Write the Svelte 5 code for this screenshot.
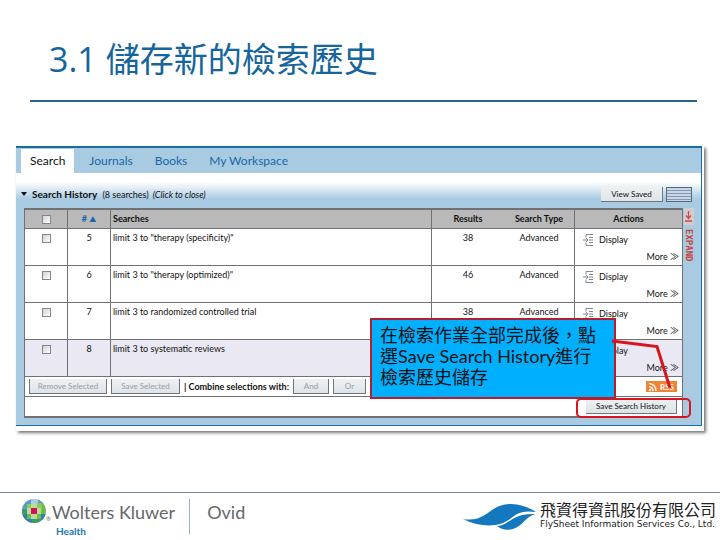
<script>
	const tabs = ['Search', 'Journals', 'Books', 'My Workspace'];
	const active = 'Search';

	const searches = [
		{ id: 5, text: 'limit 3 to "therapy (specificity)"', results: 38, type: 'Advanced' },
		{ id: 6, text: 'limit 3 to "therapy (optimized)"', results: 46, type: 'Advanced' },
		{ id: 7, text: 'limit 3 to randomized controlled trial', results: 38, type: 'Advanced' },
		{ id: 8, text: 'limit 3 to systematic reviews', results: '', type: '' }
	];
</script>

<div class="slide">
	<h1 class="title">3.1 儲存新的檢索歷史</h1>

	<main class="shot">
		<div class="panel">
			<nav class="tabs">
				{#each tabs as tab}
					<a href="#top" class="tab" class:active={tab === active}>{tab}</a>
				{/each}
			</nav>

			<div class="heading">
				<span class="arrow"></span>
				<h2>Search History</h2>
				<span class="count">(8 searches)</span>
				<em>(Click to close)</em>
				<button class="btn view">View Saved</button>
				<span class="stripes"></span>
			</div>

			<div class="body">
				<div class="grid">
					<table>
						<thead>
							<tr>
								<th class="check"><input type="checkbox" aria-label="Select all" /></th>
								<th class="num"># <span class="sort">▲</span></th>
								<th class="text">Searches</th>
								<th class="results">Results</th>
								<th class="type">Search Type</th>
								<th class="actions">Actions</th>
							</tr>
						</thead>
						<tbody>
							{#each searches as s}
								<tr class:last={s.id === 8}>
									<td class="check"><input type="checkbox" aria-label={`Select search ${s.id}`} /></td>
									<td class="num">{s.id}</td>
									<td class="text">{s.text}</td>
									<td class="results">{s.results}</td>
									<td class="type">{s.type}</td>
									<td class="actions">
										<a href="#top" class="display">
											<svg width="11" height="12" viewBox="0 0 11 12" aria-hidden="true">
												<path
													d="M3 .5h7M3 .5v3M3 8.500v3M3 11.500h7M6 3.500h4M6 6h4M6 8.500h4M0 6h5M3 4l2 2-2 2"
													fill="none"
													stroke="#7f8890"
												/>
											</svg>
											Display
										</a>
										<a href="#top" class="more">More ≫</a>
									</td>
								</tr>
							{/each}
						</tbody>
					</table>
					<div class="bar">
						<button class="btn remove" disabled>Remove Selected</button>
						<button class="btn save" disabled>Save Selected</button>
						<span class="combine">| Combine selections with:</span>
						<button class="btn and" disabled>And</button>
						<button class="btn or" disabled>Or</button>
						<a href="#top" class="rss">
							<svg width="11" height="10" viewBox="0 0 11 10" aria-hidden="true">
								<circle cx="3" cy="8" r="1.2" fill="#fff" />
								<path d="M2 4.6a4 4 0 0 1 4 4.4M2 1.6a7 7 0 0 1 7 7.4" fill="none" stroke="#fff" stroke-width="1.4" />
							</svg>
							<span>RSS</span>
						</a>
					</div>
					<div class="bar end">
						<button class="btn history">Save Search History</button>
					</div>
				</div>
				<button class="expand">
					<span class="pin">
						<svg width="7" height="11" viewBox="0 0 7 11" aria-hidden="true">
							<path d="M3.5 0v7M1 4.5l2.5 3 2.5-3M0 10h7" fill="none" stroke="#d2453c" stroke-width="1.3" />
						</svg>
					</span>
					<span class="side">EXPAND</span>
				</button>
			</div>
		</div>

		<div class="frame"></div>
		<div class="callout" lang="zh-TW">
			在檢索作業全部完成後&#xff0c;點<br />選Save Search History進行<br />檢索歷史儲存
		</div>
		<svg class="pointer" width="64" height="54" viewBox="0 0 64 54" aria-hidden="true">
			<path d="M2 4L47 9.5L60 51" fill="none" stroke="#d8141c" stroke-width="3" />
		</svg>
	</main>

	<footer>
		<svg class="globe" width="24" height="24" viewBox="0 0 24 24" aria-hidden="true">
			<clipPath id="ball"><circle cx="12" cy="12" r="12" /></clipPath>
			<g clip-path="url(#ball)">
				<path fill="#6fbb4a" d="M0 0h24v24H0z" />
				<path fill="#5a9bd0" d="M0 0h9v5H0zM16 0h8v5h-8zM0 5h5v5H0z" />
				<path fill="#a8cfe8" d="M9 0h7v5H9z" />
				<path fill="#2f7fb8" d="M0 15h5v9H0zM5 20h5v4H5zM19 15h5v9h-5z" />
				<path fill="#3d9a6a" d="M0 10h5v5H0zM10 20h9v4h-9z" />
				<path fill="#b9dc9a" d="M9 5h6v4H9zM5 9h4v6H5zM15 9h4v6h-4zM9 15h6v5H9z" />
				<path fill="#8fca55" d="M15 4h5v5h-5zM5 5h4v4H5z" />
				<path fill="#d3125a" d="M9 9h6v6H9z" />
			</g>
		</svg>
		<span class="reg">®</span>
		<div class="brand">
			<span class="kluwer">Wolters Kluwer</span>
			<span class="health">Health</span>
		</div>
		<span class="ovid">Ovid</span>
		<div class="flysheet">
			<svg class="wave" width="74" height="26" viewBox="0 0 74 26" aria-hidden="true">
				<path
					d="M0 15C18 18 24 8 34 3C48-3 62 1 73 8C60 6 54 9 47 15C38 22 20 25 0 15Z"
					fill="#1478be"
				/>
				<path d="M34 22C46 22 48 9 72 10C62 13 60 22 50 25C43 27 38 25 34 22Z" fill="#1478be" />
			</svg>
			<div class="company">
				<span class="zh">飛資得資訊股份有限公司</span>
				<span class="en">FlySheet Information Services Co., Ltd.</span>
			</div>
		</div>
	</footer>
</div>

<style>
	:global(body) {
		margin: 0;
		background: #fff;
	}

	.slide {
		display: flex;
		flex-direction: column;
		min-height: 100vh;
		font-family: Lato, 'Noto Sans CJK TC', sans-serif;
		font-size: 10px;
		color: #111;
	}

	a {
		color: inherit;
		text-decoration: none;
	}

	.title {
		margin: 35px 23px 0 30px;
		padding: 0 0 17px 19px;
		border-bottom: 2px solid #2b6485;
		font-family: 'Open Sans', 'Noto Sans CJK TC', sans-serif;
		font-size: 34px;
		font-weight: 400;
		line-height: 48px;
		color: #16659b;
	}

	.shot {
		position: relative;
		margin: 44px 16px 0;
		padding: 0 2px 5px 0;
		background: #fff;
		box-shadow: 2px 2px 3px #777;
	}

	.panel {
		border: solid #1b6ca3;
		border-width: 2px 1px 1px 0;
		background: #a9cbe2;
	}

	.tabs {
		display: flex;
		height: 25px;
		padding: 1px 0 0 5px;
		box-sizing: border-box;
		font-size: 12px;
		line-height: 24px;
		color: #1767a6;
	}

	.tab {
		padding: 0 11px;
	}

	.tab.active {
		padding: 0 9px;
		margin-right: 4px;
		background: #fff;
		color: #111;
	}

	.heading {
		display: flex;
		align-items: center;
		height: 35px;
		padding: 7px 9px 0 5px;
		box-sizing: border-box;
		background: linear-gradient(#fff 9px, #a9cbe2 26px);
	}

	.arrow {
		border: 3px solid transparent;
		border-top: 4px solid #111;
		border-bottom: 0;
		margin-right: 5px;
	}

	h2 {
		margin: 0 5px 0 0;
		font-size: 10px;
		font-weight: 700;
	}

	.count {
		font-size: 9px;
		margin-right: 4px;
	}

	em {
		font-size: 9px;
	}

	.btn {
		height: 15px;
		padding: 0;
		border: solid #70757c;
		border-width: 0 1px 1px 0;
		background: linear-gradient(#eef1f3, #dde4e8);
		font-family: inherit;
		font-size: 8px;
		line-height: 14px;
		color: #111;
	}

	.btn:disabled {
		border-left-width: 1px;
		color: #999fa4;
	}

	.view {
		width: 62px;
		margin-left: auto;
	}

	.stripes {
		width: 24px;
		height: 13px;
		margin-left: 3px;
		border: 1px solid #56697f;
		background: repeating-linear-gradient(#c8d6e6 0 2px, #8497b0 2px 3px);
	}

	.body {
		display: flex;
		align-items: flex-start;
		padding: 0 7px 7px 8px;
	}

	.grid {
		flex: 1;
		border: solid #707075;
		border-width: 2px 1px;
		background: #fff;
	}

	table {
		width: 100%;
		table-layout: fixed;
		border-collapse: separate;
		border-spacing: 0;
		font-size: 9px;
		line-height: 12px;
	}

	th,
	td {
		box-sizing: border-box;
		padding: 3px 0 0;
		border-bottom: 1px solid #707075;
		text-align: center;
		vertical-align: top;
	}

	th {
		height: 19px;
		padding: 0;
		background: #b9b9b9;
		vertical-align: middle;
	}

	td {
		height: 37px;
	}

	.last td {
		background: #e9e8f3;
	}

	.check {
		width: 43px;
		border-right: 1px solid #707075;
	}

	.num {
		width: 43px;
		border-right: 1px solid #707075;
	}

	th.num {
		color: #1767a6;
	}

	.sort {
		font-size: 7px;
	}

	.text {
		padding-left: 2px;
		border-right: 1px solid #707075;
		text-align: left;
	}

	.results {
		width: 72px;
	}

	.type {
		width: 71px;
		border-right: 1px solid #707075;
	}

	.actions {
		width: 107px;
	}

	td.actions {
		padding: 5px 3px 0 8px;
	}

	input {
		appearance: none;
		width: 9px;
		height: 9px;
		margin: 0;
		border: 1px solid #83868a;
		background: linear-gradient(135deg, #cfd1d4, #fff);
		vertical-align: middle;
	}

	.display {
		display: flex;
		align-items: center;
		gap: 5px;
	}

	.more {
		display: block;
		margin-top: 5px;
		text-align: right;
	}

	.bar {
		display: flex;
		align-items: center;
		gap: 4px;
		height: 19px;
		padding: 0 5px 0 4px;
		border-bottom: 1px solid #707075;
	}

	.bar.end {
		justify-content: flex-end;
		border-bottom: 0;
	}

	.remove {
		width: 78px;
	}

	.save {
		width: 69px;
	}

	.combine {
		font-size: 9px;
		font-weight: 700;
	}

	.and {
		width: 36px;
	}

	.or {
		width: 33px;
	}

	.history {
		width: 91px;
	}

	.rss {
		display: flex;
		align-items: center;
		gap: 2px;
		height: 11px;
		width: 31px;
		box-sizing: border-box;
		padding-left: 1px;
		margin-left: auto;
		background: #ee8434;
		font-size: 8px;
		font-weight: 700;
		color: #fff;
	}

	.expand {
		display: flex;
		flex-direction: column;
		align-items: center;
		width: 11px;
		padding: 0;
		border: 0;
		background: none;
	}

	.pin {
		display: flex;
		align-items: center;
		justify-content: center;
		width: 10px;
		height: 17px;
		background: #d0ccd2;
	}

	.side {
		margin-top: 4px;
		writing-mode: vertical-rl;
		font-family: 'DejaVu Sans Mono', monospace;
		font-size: 9px;
		font-weight: 700;
		line-height: 11px;
		color: #c8433f;
	}

	/* annotations laid over the search panel */
	.frame {
		position: absolute;
		right: 13px;
		bottom: 13px;
		width: 111px;
		height: 16px;
		border: 2px solid #d8141c;
		border-radius: 5px;
	}

	.callout {
		position: absolute;
		right: 88px;
		bottom: 32px;
		width: 246px;
		padding: 5px 0 9px 8px;
		box-sizing: border-box;
		border: 2px solid #b3202c;
		background: #00b0ff;
		font-size: 18px;
		line-height: 21px;
		white-space: nowrap;
	}

	.pointer {
		position: absolute;
		right: 30px;
		bottom: 40px;
	}

	footer {
		display: flex;
		align-items: flex-start;
		height: 48px;
		margin-top: auto;
		padding: 0 4px 0 22px;
		box-sizing: border-box;
		border-top: 1px solid #6c8aa8;
		color: #66676b;
	}

	.globe {
		margin-top: 6px;
	}

	.reg {
		width: 6px;
		margin-top: 22px;
		font-size: 6px;
		line-height: 8px;
	}

	.brand {
		display: flex;
		flex-direction: column;
		height: 35px;
		margin-top: 6px;
		padding-right: 14px;
		border-right: 1px solid #8fb4cc;
	}

	.kluwer,
	.ovid {
		font-size: 18px;
		line-height: 26px;
	}

	.health {
		padding-left: 4px;
		font-size: 10px;
		font-weight: 700;
		line-height: 12px;
		color: #1878ad;
	}

	.ovid {
		margin: 6px 0 0 17px;
	}

	.flysheet {
		display: flex;
		gap: 3px;
		margin: 8px 0 0 auto;
		color: #222;
	}

	.wave {
		margin-top: 3px;
	}

	.company {
		display: flex;
		flex-direction: column;
	}

	.zh {
		font-size: 16px;
		line-height: 17px;
	}

	.en {
		font-family: 'DejaVu Sans', sans-serif;
		font-size: 9px;
		line-height: 12px;
	}
</style>
